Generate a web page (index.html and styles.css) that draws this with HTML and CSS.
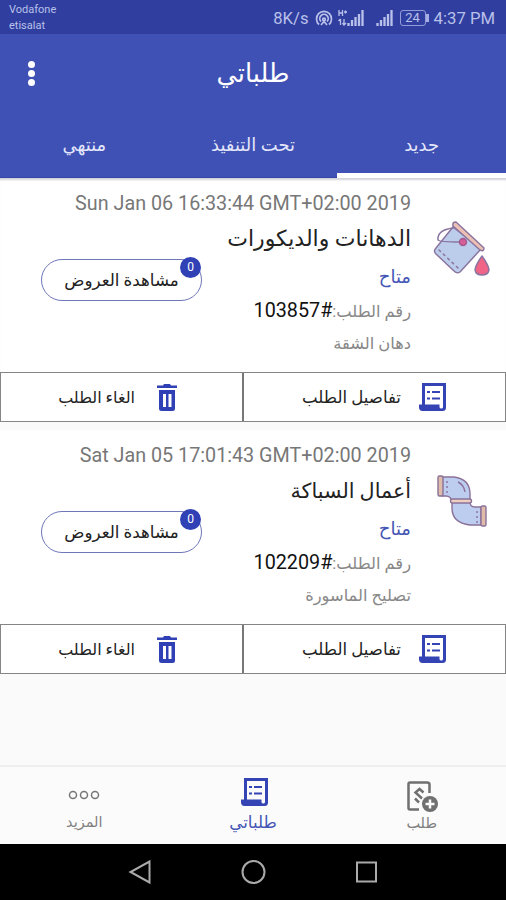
FILE: index.html
```html
<!DOCTYPE html>
<html lang="ar" dir="rtl">
<head>
<meta charset="utf-8">
<title>طلباتي</title>
<link rel="stylesheet" href="styles.css">
</head>
<body>
<svg width="0" height="0" class="defs" aria-hidden="true">
  <symbol id="receipt" viewBox="0 0 27 28">
    <path fill="#3444b4" fill-rule="evenodd" d="M3 0H27V24.500Q27 28 23.500 28H3.500Q0 28 0 24V21.500H3ZM6 3V21.500H20.500V24Q20.500 25.500 22.300 25.500Q24 25.500 24 24V3Z"/>
    <path stroke="#3444b4" stroke-width="2" d="M8 9h3M13 9h8M8 15.500h3M13 15.500h8"/>
  </symbol>
  <symbol id="trash" viewBox="0 0 20 27">
    <path fill="#3041b5" fill-rule="evenodd" d="M0 1.500H6L7 0H13L14 1.500H20V4H0ZM2 6H18V24.500Q18 27 15.500 27H4.500Q2 27 2 24.500ZM6 10V23H9V10ZM11.500 10V23H14.500V10Z"/>
  </symbol>
  <symbol id="bars" viewBox="0 0 17 16">
    <path stroke="#b9c0ea" stroke-width="2.300" d="M1.500 16V13M5 16V10M8.500 16V7M12 16V4M15.500 16V0"/>
  </symbol>
</svg>

<header class="statusbar" dir="ltr">
  <div class="carriers"><span>Vodafone</span><span>etisalat</span></div>
  <div class="indicators">
    <span class="speed">8K/s</span>
    <svg class="hotspot" viewBox="0 0 18 16" fill="none" stroke="#b9c0ea" stroke-width="1.700"><path d="M4 14.500A7.500 7.500 0 1 1 14 14.500M6 11.500A4.200 4.200 0 1 1 12 11.500"/><circle cx="9" cy="9.500" r="1.300"/><path d="M6 15L9 11.500L12 15"/></svg>
    <span class="signal-data"><svg class="network" viewBox="0 0 9 16" fill="none" stroke="#b9c0ea" stroke-width="1.300"><path d="M1 0V6M4.500 0V6M1 3H4.500M6 2H9M7.500 .5V3.500M2.500 9V15M.5 11L2.500 9M6 9V15M4.500 13L6 15L8 13"/></svg><svg class="bars" viewBox="0 0 17 16"><use href="#bars"/></svg></span>
    <svg class="bars second" viewBox="0 0 17 16"><use href="#bars"/></svg>
    <span class="battery">24</span>
    <span class="clock">4:37 PM</span>
  </div>
</header>

<div class="toolbar">
  <div class="titlebar">
    <h1>طلباتي</h1>
    <button class="overflow" aria-label="القائمة"><i></i><i></i><i></i></button>
  </div>
  <nav class="tabs">
    <a class="tab active"><span>جديد</span></a>
    <a class="tab"><span>تحت التنفيذ</span></a>
    <a class="tab"><span>منتهي</span></a>
  </nav>
</div>

<main>
  <article class="card">
    <div class="body">
      <div class="service">
        <svg viewBox="0 0 60 60" width="60" height="60" fill="none" stroke="#8b75a0" stroke-width="1.500" stroke-linejoin="round" stroke-linecap="round">
          <path fill="#bccdec" d="M21 7L49 29L28 52Q25 54 22 51L4 34Q1 31 4 28Z"/>
          <path fill="#edc0b4" d="M24 2Q20 2 21 6L48 30Q52 32 52 28Z"/>
          <path d="M21 8Q5 10 6 20Q7 22 28 22"/>
          <circle cx="31" cy="22" r="3.500" fill="#d45e96" stroke="#a45a91"/>
          <path stroke-dasharray="2 4" d="M7 30L26 48"/>
          <path fill="#f06488" d="M50 36Q43 46 43 50Q44 55 50 55Q56 55 57 50Q57 46 50 36Z"/>
        </svg>
      </div>
      <div class="info">
        <div class="date" dir="ltr">Sun Jan 06 16:33:44 GMT+02:00 2019</div>
        <div class="row">
          <div class="details">
            <h2>الدهانات والديكورات</h2>
            <p class="state">متاح</p>
            <p>رقم الطلب:<b dir="ltr">103857#</b></p>
            <p>دهان الشقة</p>
          </div>
          <button class="offers"><span>مشاهدة العروض</span><em>0</em></button>
        </div>
      </div>
    </div>
    <div class="actions">
      <button class="action view"><svg class="receipt"><use href="#receipt"/></svg><span>تفاصيل الطلب</span></button>
      <button class="action cancel"><svg class="trash"><use href="#trash"/></svg><span>الغاء الطلب</span></button>
    </div>
  </article>

  <article class="card">
    <div class="body">
      <div class="service">
        <svg viewBox="0 0 60 60" width="60" height="60" fill="none" stroke="#8b7199" stroke-width="1.400" stroke-linejoin="round">
          <path fill="#bccdf0" d="M10 5H22Q38 7 38 22V30Q38 35 43 35H49V53H38Q20 51 20 36V30Q19 24 14 24H10Z"/>
          <rect x="6" y="4" width="5" height="20" rx="1.500" fill="#dfbba9"/>
          <rect x="49" y="34" width="5" height="20" rx="1.500" fill="#dfbba9"/>
          <rect x="18.500" y="27" width="21" height="4" rx="2" fill="#efd0c0"/>
          <path stroke-dasharray="2 3" d="M15 9V21M45 39V51"/>
          <path d="M26 10Q32 13 33 20"/>
        </svg>
      </div>
      <div class="info">
        <div class="date" dir="ltr">Sat Jan 05 17:01:43 GMT+02:00 2019</div>
        <div class="row">
          <div class="details">
            <h2 class="short">أعمال السباكة</h2>
            <p class="state">متاح</p>
            <p>رقم الطلب:<b dir="ltr">102209#</b></p>
            <p>تصليح الماسورة</p>
          </div>
          <button class="offers"><span>مشاهدة العروض</span><em>0</em></button>
        </div>
      </div>
    </div>
    <div class="actions">
      <button class="action view"><svg class="receipt"><use href="#receipt"/></svg><span>تفاصيل الطلب</span></button>
      <button class="action cancel"><svg class="trash"><use href="#trash"/></svg><span>الغاء الطلب</span></button>
    </div>
  </article>
</main>

<nav class="bottom">
  <a class="item"><svg width="32" height="31" viewBox="0 0 32 31" fill="none" stroke="#707070" stroke-width="2.500"><path d="M13 28.500H4Q2.500 28.500 2.500 27V3Q2.500 1.500 4 1.500H21Q23.500 1.500 23.500 3.500V12"/><path stroke-width="2.500" d="M17.500 11.500L13.500 8L9.500 11.500L16 17.500M9 17.500L13 21.500"/><circle cx="24" cy="23" r="8" fill="#707070" stroke="none"/><path stroke="#fafafa" d="M24 18.500V27.500M19.500 23H28.500"/></svg><span>طلب</span></a>
  <a class="item current"><svg class="receipt"><use href="#receipt"/></svg><span>طلباتي</span></a>
  <a class="item"><svg width="32" height="12" viewBox="0 0 32 12" fill="none" stroke="#777" stroke-width="1.500"><circle cx="5" cy="6" r="3.500"/><circle cx="16" cy="6" r="3.500"/><circle cx="27" cy="6" r="3.500"/></svg><span>المزيد</span></a>
</nav>

<footer class="system" dir="ltr">
  <svg viewBox="0 0 24 26"><path d="M21 2.500V23.500L2 13Z"/></svg>
  <svg viewBox="0 0 24 26"><circle cx="12" cy="13" r="11"/></svg>
  <svg viewBox="0 0 24 26"><rect x="2.500" y="3.500" width="19" height="19"/></svg>
</footer>
</body>
</html>
```

FILE: styles.css
```css
* { box-sizing: border-box; }
body {
  margin: 0;
  width: 506px;
  height: 900px;
  display: flex;
  flex-direction: column;
  overflow: hidden;
  background: #fafafa;
  color: #222;
  font-family: Roboto, "DejaVu Sans", sans-serif;
  white-space: nowrap;
}
h1, h2, p { margin: 0; font-weight: 400; }
button { border: 0; background: none; padding: 0; font: inherit; color: inherit; }
svg { flex: none; }
.defs { position: absolute; }

.statusbar {
  height: 34px;
  background: #303f9f;
  color: #b9c0ea;
  display: flex;
  justify-content: space-between;
  padding: 0 11px 0 9px;
}
.carriers { display: flex; flex-direction: column; font-size: 11px; line-height: 16px; padding-top: 2px; }
.indicators { display: flex; align-items: center; font-size: 16.700px; padding-top: 2px; }
.hotspot { width: 18px; height: 16px; margin-left: 6px; }
.signal-data { display: flex; margin-left: 5px; }
.network { width: 9px; height: 16px; }
.bars { width: 17px; height: 16px; }
.second { margin-left: 12px; }
.battery {
  position: relative;
  width: 26px;
  height: 16px;
  margin: 0 8px 0 7px;
  border: 1px solid #929cdb;
  border-radius: 3px;
  font-size: 13px;
  line-height: 14px;
  text-align: center;
}
.battery::after { content: ""; position: absolute; right: -4px; top: 3px; width: 3px; height: 8px; background: #a5afe4; }

.toolbar { height: 144px; background: #3f51b5; color: #fff; border-bottom: 1px solid #3444a8; }
.titlebar { height: 78px; display: grid; grid-template-columns: 62px 1fr 62px; align-items: center; }
.titlebar h1 { grid-column: 2; text-align: center; font-size: 25.700px; line-height: 36px; }
.overflow { display: flex; flex-direction: column; align-items: center; gap: 2px; }
.overflow i { width: 7px; height: 7px; border-radius: 50%; background: #fff; }
.tabs { height: 65px; display: flex; }
.tab { flex: 1; display: flex; align-items: center; justify-content: center; font-size: 18px; color: #e4e7fb; height: 66px; padding-top: 3px; border-bottom: 5px solid transparent; }
.tab.active { border-color: #fff; }

main { flex: 1; display: flex; flex-direction: column; gap: 8px; }
.card { height: 244px; background: #fff; }
.card:first-child { box-shadow: inset 0 3px 2px -1px #d2d2da; }
.body { height: 194px; display: flex; padding-top: 8px; }
.service { width: 95px; padding: 34px 15px 0 20px; }
.service svg { display: block; margin-right: -1px; }
.info { flex: 1; }
.date { text-align: right; color: #777; font-size: 19.750px; line-height: 36px; height: 34px; }
.row { display: flex; justify-content: space-between; padding-left: 41px; }
.details { color: #888; font-size: 16.300px; }
.details h2 { font-size: 22px; line-height: 38px; color: #222; height: 40px; }
.details h2.short { font-size: 20.700px; }
.details p { line-height: 34px; height: 33.5px; }
.details .state { color: #4556b5; font-size: 18px; line-height: 33px; }
.details b { font-weight: 400; color: #111; font-size: 19.750px; }
.offers { position: relative; width: 161px; height: 42px; margin-top: 39px; border: 1.500px solid #6f77b9; border-radius: 21px; font-size: 16.700px; }
.offers em { position: absolute; right: 0; top: -3px; width: 21px; height: 21px; border-radius: 50%; background: #3041b5; color: #fff; font-style: normal; font-size: 12px; line-height: 21px; }
.actions { display: flex; height: 50px; border: 1.500px solid #858585; }
.action { display: flex; align-items: center; font-size: 16.600px; }
.view { width: 263px; padding-right: 59px; gap: 18px; border-left: 2px solid #777; }
.cancel { flex: 1; padding-right: 65px; gap: 22px; font-size: 16px; }
.receipt { width: 27px; height: 28px; }
.trash { width: 20px; height: 27px; }

.bottom { height: 79px; display: flex; border-top: 2px solid #efefef; background: #fbfbfb; }
.item { flex: 1; display: flex; flex-direction: column; align-items: center; font-size: 14.500px; color: #808080; padding-top: 14px; }
.item span { line-height: 24px; margin-top: auto; margin-bottom: 9px; }
.item:last-child { padding-top: 22px; }
.current { color: #4556b5; font-size: 16.700px; padding-top: 11px; }
.current .receipt { margin-right: -3px; }
.system { height: 56px; background: #000; display: flex; justify-content: center; align-items: center; gap: 88px; }
.system svg { width: 25px; height: 26px; fill: none; stroke: #aaa; stroke-width: 2; }
```
